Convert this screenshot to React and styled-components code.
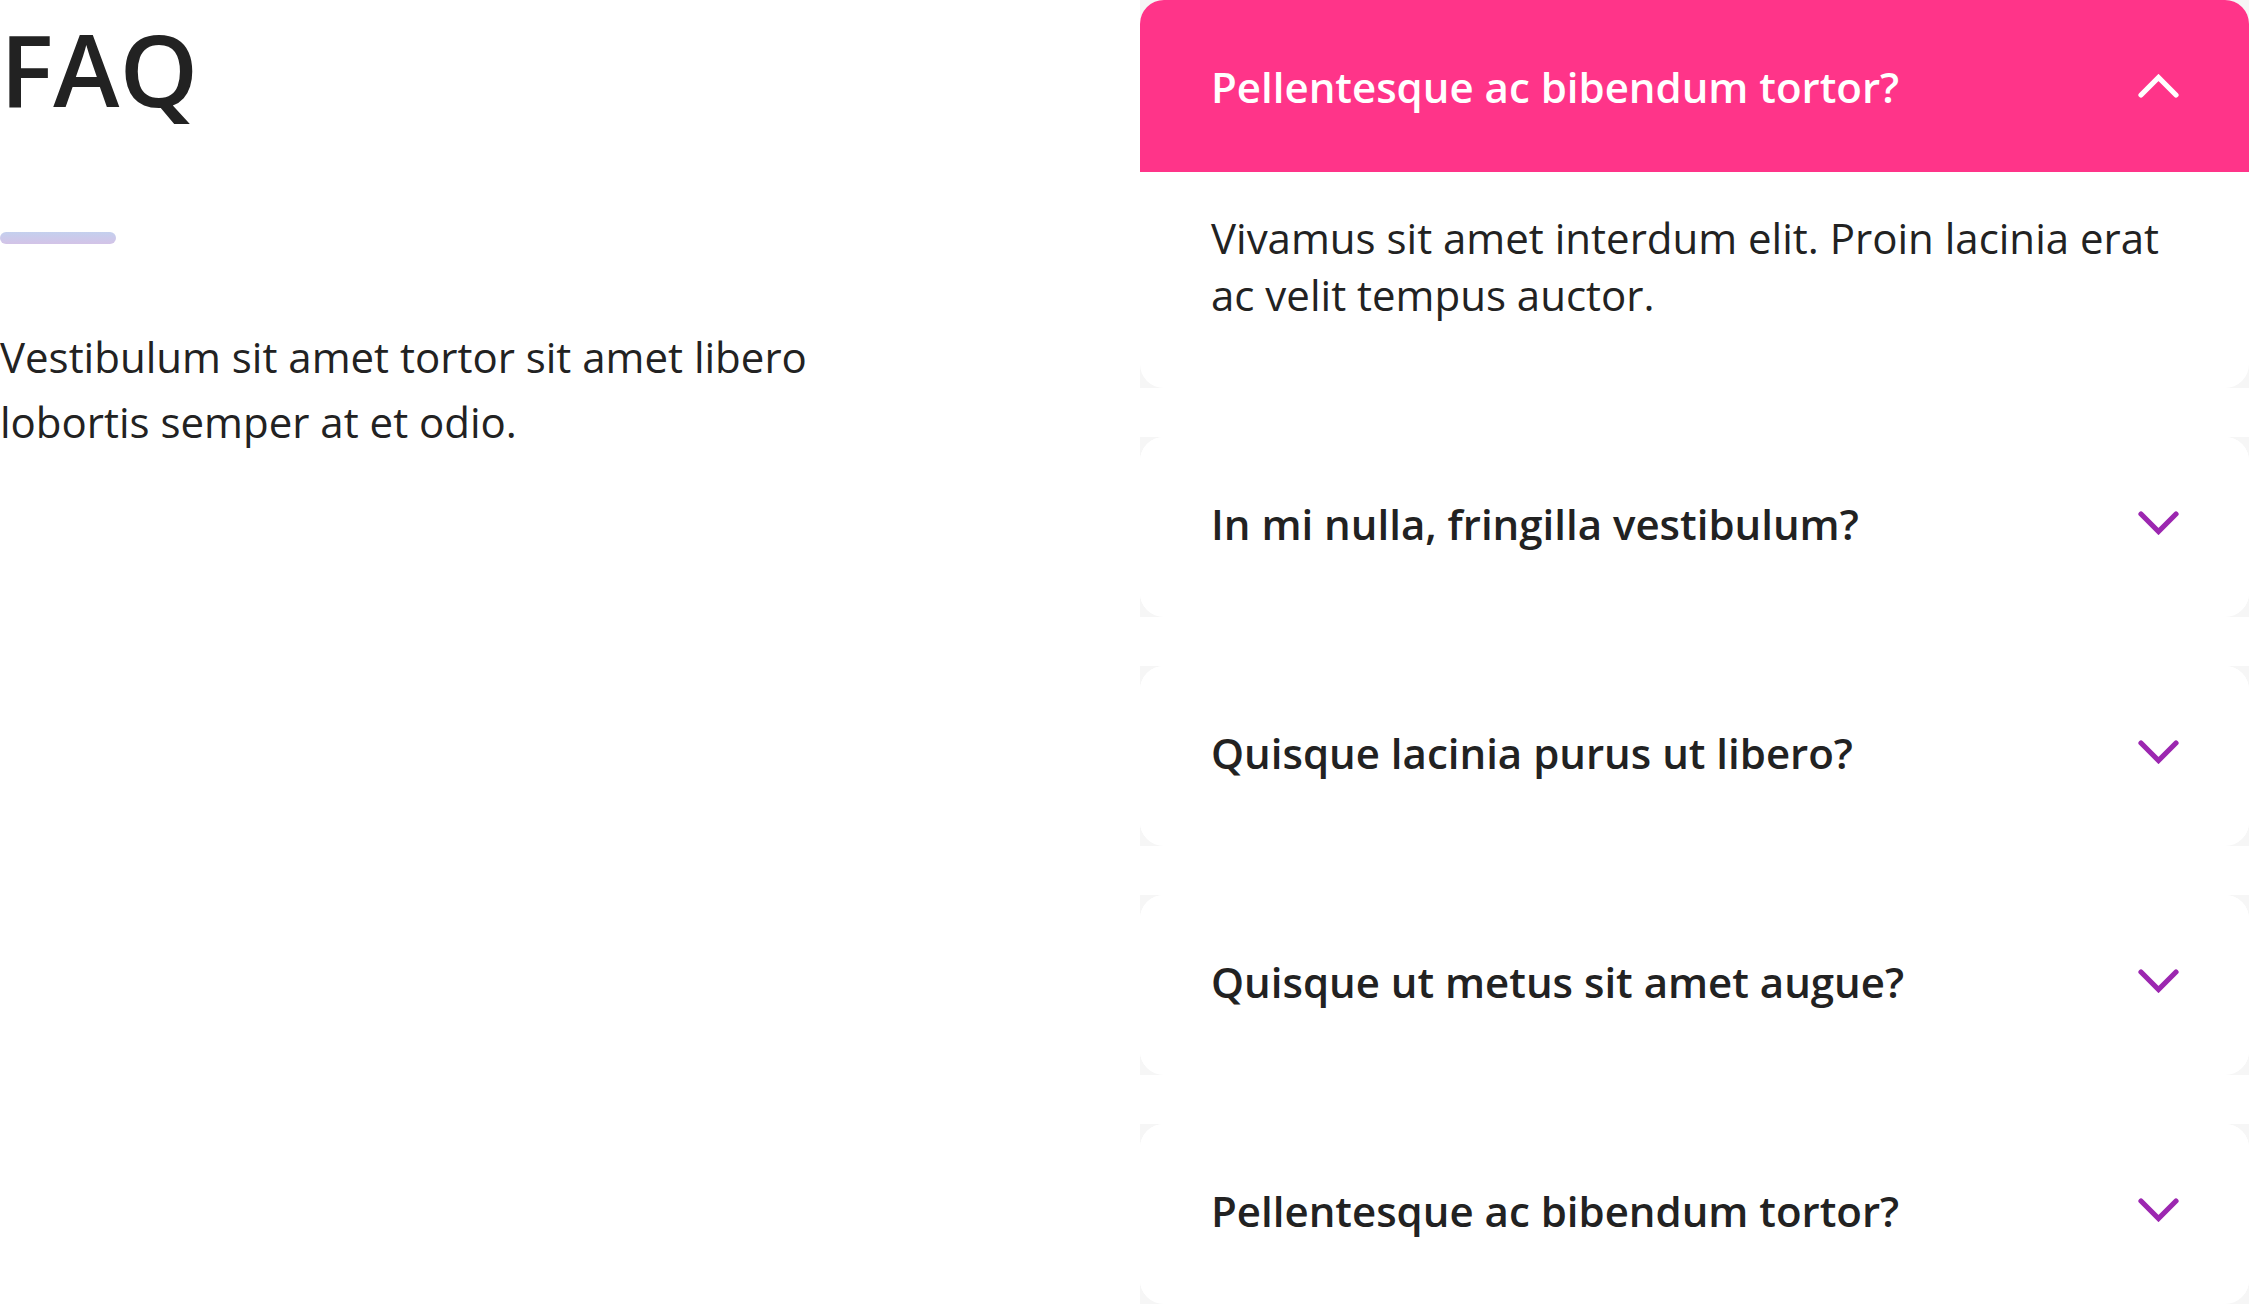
import React from "react";
import styled, { createGlobalStyle } from "styled-components";

const GlobalStyle = createGlobalStyle`
  html, body { margin: 0; padding: 0; background: #ffffff; }
  body { font-family: "Open Sans", "Noto Sans", sans-serif; color: #222222; }
  * { box-sizing: border-box; }
`;

const Page = styled.main`
  display: grid;
  grid-template-columns: 1fr 1109px;
  width: 2249px;
  min-height: 1305px;
`;

const Intro = styled.section`
  display: flex;
  flex-direction: column;
  align-items: flex-start;
  padding-top: 8px;
`;

const Title = styled.h1`
  margin: 0;
  font-size: 100px;
  line-height: 120px;
  font-weight: 600;
  color: #222222;
`;

const Accent = styled.div`
  width: 116px;
  height: 12px;
  margin-top: 104px;
  border-radius: 6px;
  background: linear-gradient(180deg, #c4d0ee 0%, #d3c3e7 100%);
`;

const Lead = styled.p`
  margin: 80px 0 0;
  max-width: 880px;
  font-size: 42px;
  line-height: 65px;
  font-weight: 400;
  color: #222222;
`;

const List = styled.section`
  display: flex;
  flex-direction: column;
  gap: 49px;
`;

const Slot = styled.div`
  background: #f6f6f6;
`;

const Card = styled.div`
  background: #ffffff;
  border-radius: 24px;
  overflow: hidden;
  padding-bottom: ${(p) => (p.$open ? "0" : "8px")};
`;

const Header = styled.div`
  display: flex;
  align-items: center;
  justify-content: space-between;
  height: 172px;
  padding: 0 70px 0 71px;
  background: ${(p) => (p.$open ? "#ff3489" : "#ffffff")};
  color: ${(p) => (p.$open ? "#ffffff" : "#222222")};
`;

const Question = styled.h3`
  margin: 0;
  font-size: 42px;
  font-weight: 600;
  line-height: 57px;
  color: inherit;
`;

const Answer = styled.p`
  margin: 0;
  padding: 37px 72px 65px 71px;
  font-size: 42px;
  line-height: 57px;
  font-weight: 400;
  color: #222222;
`;

const Chevron = ({ up, color }) => (
  <svg width="41" height="24" viewBox="0 0 41 24" fill="none">
    <polyline
      points={up ? "3,21 20.5,3.5 38,21" : "3,3 20.5,20.5 38,3"}
      stroke={color}
      strokeWidth="5.2"
      strokeLinecap="round"
      strokeLinejoin="miter"
    />
  </svg>
);

const items = [
  {
    q: "Pellentesque ac bibendum tortor?",
    a: "Vivamus sit amet interdum elit. Proin lacinia erat ac velit tempus auctor.",
    open: true,
  },
  { q: "In mi nulla, fringilla vestibulum?" },
  { q: "Quisque lacinia purus ut libero?" },
  { q: "Quisque ut metus sit amet augue?" },
  { q: "Pellentesque ac bibendum tortor?" },
];

export default function App() {
  return (
    <>
      <GlobalStyle />
      <Page>
        <Intro>
          <Title>FAQ</Title>
          <Accent />
          <Lead>Vestibulum sit amet tortor sit amet libero lobortis semper at et odio.</Lead>
        </Intro>
        <List>
          {items.map((it, i) => (
            <Slot key={i}>
              <Card $open={it.open}>
                <Header $open={it.open}>
                  <Question>{it.q}</Question>
                  <Chevron up={it.open} color={it.open ? "#ffffff" : "#9c27b0"} />
                </Header>
                {it.open && <Answer>{it.a}</Answer>}
              </Card>
            </Slot>
          ))}
        </List>
      </Page>
    </>
  );
}
